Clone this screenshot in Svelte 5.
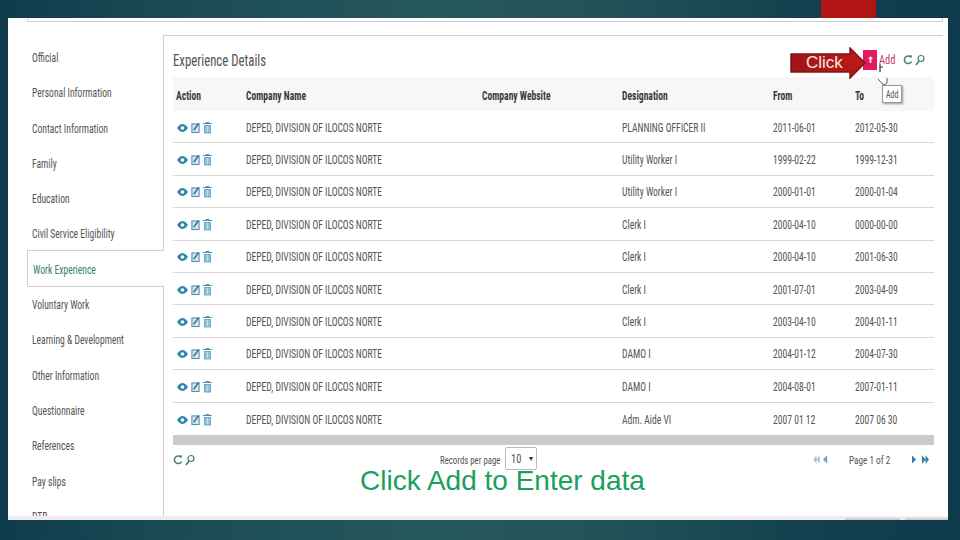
<script>
  const nav = ['Official','Personal Information','Contact Information','Family','Education','Civil Service Eligibility','Work Experience','Voluntary Work','Learning & Development','Other Information','Questionnaire','References','Pay slips','DTR'];
  const heads = ['Company Name','Company Website','Designation','From','To'];
  const org = 'DEPED, DIVISION OF ILOCOS NORTE';
  const rows = [
    ['PLANNING OFFICER II','2011-06-01','2012-05-30'],
    ['Utility Worker I','1999-02-22','1999-12-31'],
    ['Utility Worker I','2000-01-01','2000-01-04'],
    ['Clerk I','2000-04-10','0000-00-00'],
    ['Clerk I','2000-04-10','2001-06-30'],
    ['Clerk I','2001-07-01','2003-04-09'],
    ['Clerk I','2003-04-10','2004-01-11'],
    ['DAMO I','2004-01-12','2004-07-30'],
    ['DAMO I','2004-08-01','2007-01-11'],
    ['Adm. Aide VI','2007 01 12','2007 06 30']
  ];
</script>

{#snippet refresh()}
  <svg class="ic" viewBox="0 0 10 12" width="10" height="12"><path d="M8 3.200A3.800 3.800 0 1 0 8.600 7.500" fill="none" stroke="#3f7f78" stroke-width="1.500"/><path d="M6.500 1.200 9 1.600 8.400 4.200Z" fill="#3f7f78"/></svg>
{/snippet}
{#snippet search()}
  <svg class="ic" viewBox="0 0 10 12" width="10" height="12"><circle cx="6" cy="4.500" r="3" fill="none" stroke="#3f7f78" stroke-width="1.200"/><path d="M4 7 1 11" stroke="#3f7f78" stroke-width="1.500"/></svg>
{/snippet}

<div class="slide">
  <div class="sheet">
    <div class="topline"></div>
    <div class="body">
      <nav class="side">
        {#each nav as item}
          <div class="nav" class:active={item === 'Work Experience'}><span class="t">{item}</span></div>
        {/each}
      </nav>
      <section class="main">
        <header class="head">
          <h1><span class="t">Experience Details</span></h1>
          <div class="tools">
            <span class="plus"><svg viewBox="0 0 6 8" width="5" height="7"><path d="M3 0 6 3.500H4V8H2V3.500H0Z" fill="#fff"/></svg></span>
            <span class="add"><span class="t">Add</span></span>
            {@render refresh()}
            {@render search()}
          </div>
        </header>
        <div class="table">
          <div class="row th">
            <span class="t">Action</span>
            {#each heads as h}<span class="t">{h}</span>{/each}
          </div>
          {#each rows as r}
            <div class="row">
              <span class="acts">
                <svg viewBox="0 0 11 10" width="11" height="10"><path d="M0 5Q5.500-3 11 5 5.500 13 0 5Z" fill="#2e86ad"/><circle cx="5.500" cy="5" r="1.800" fill="#fff"/></svg>
                <svg viewBox="0 0 10 12" width="9" height="12"><rect x="1" y="1.500" width="8" height="9.500" fill="#d5e8f0" stroke="#4b93b5" stroke-width="1.200"/><path d="M3 8.500 8.500 1" stroke="#2e6f8e" stroke-width="1.500"/></svg>
                <svg viewBox="0 0 9 12" width="9" height="12"><path d="M0 1.500H9M3 1.500V.5H6V1.500" stroke="#4b93b5" fill="none"/><path d="M1 3H8V11.500H1Z" fill="#6ba8c4"/><path d="M3 4V10.500M4.500 4V10.500M6 4V10.500" stroke="#fff" stroke-width=".6"/></svg>
              </span>
              <span class="t">{org}</span><span></span><span class="t">{r[0]}</span><span class="t">{r[1]}</span><span class="t">{r[2]}</span>
            </div>
          {/each}
        </div>
        <div class="scroll"></div>
        <footer class="foot">
          <div class="left">{@render refresh()}{@render search()}</div>
          <div class="perpage"><span class="t rp">Records per page</span><span class="select"><span class="t">10</span><i>▾</i></span></div>
          <div class="pager">
            <svg class="faint d" viewBox="0 0 7 10" width="7" height="9"><path d="M3.500 0V10L0 5ZM7 0V10L3.500 5Z"/></svg>
            <svg class="faint2 s" viewBox="0 0 6 10" width="5" height="9"><path d="M5 0V10L0 5Z"/></svg>
            <span class="pi"><span class="t">Page 1 of 2</span></span>
            <svg class="s2" viewBox="0 0 5 10" width="4" height="9"><path d="M0 0V10L5 5Z"/></svg>
            <svg class="d2" viewBox="0 0 8 10" width="7" height="9"><path d="M0 0V10L4 5ZM4 0V10L8 5Z"/></svg>
          </div>
        </footer>
      </section>
    </div>
  </div>

  <div class="redtab"></div>
  <svg class="arrow" viewBox="0 0 76 32" width="76" height="32"><defs><linearGradient id="g" x1="0" x2="1"><stop offset="0" stop-color="#a01514"/><stop offset="1" stop-color="#bd1a16"/></linearGradient></defs><path d="M1 7H60V1L75 16 60 31V25H1Z" fill="url(#g)" stroke="#7d1414" stroke-width="1.500"/></svg>
  <span class="clicktxt">Click</span>
  <svg class="cursor" viewBox="0 0 12 22" width="12" height="22"><path d="M2 0V8M2 3H5" stroke="#333" stroke-width="1.200" fill="none"/><path d="M0 15Q3 19 6 21 10 20 9 14" stroke="#555" fill="#fff"/></svg>
  <span class="tip"><span class="t">Add</span></span>
  <div class="caption">Click Add to Enter data</div>
  <div class="strip a"></div>
  <div class="strip b"></div>
</div>

<style>
  :global(body){margin:0}
  .slide{position:relative;width:960px;height:540px;overflow:hidden;padding:18px 12px 20px 8px;box-sizing:border-box;
    background:linear-gradient(90deg,#103b4c 0,#1b4a55 18%,#27585c 45%,#235359 62%,#133f4e 85%,#0e3a4c 100%);}
  .sheet{height:502px;background:#fff;overflow:hidden;border-bottom:4px solid #eeeeee;box-sizing:border-box;
    font-family:"Roboto",sans-serif;font-stretch:75%;color:#444;}
  .t{display:inline-block;transform:scaleX(.8);transform-origin:left center;white-space:nowrap}
  .topline{height:3px;margin:0 5px 0 19px;border-bottom:1px solid #cfcfcf;border-left:1px solid #d6d6d6;border-right:1px solid #d6d6d6;box-sizing:content-box}
  .body{display:flex;margin-top:13px;margin-right:5px;height:490px}
  .side{width:155px;flex:none;padding-top:6px;box-sizing:border-box}
  .nav{height:35.3px;line-height:35.3px;padding-left:24px;font-size:12px;color:#555;white-space:nowrap}
  .nav.active{margin-left:19px;padding-left:5px;background:#fff;border:1px solid #cfcfcf;border-right:0;margin-right:-1px;height:37px;line-height:38px;margin-top:-2.5px;margin-bottom:.8px;position:relative;z-index:1;color:#3c7d78;box-sizing:border-box}
  .main{flex:1;border-left:1px solid #cfcfcf;border-top:1px solid #cfcfcf;padding:0 9px;box-sizing:border-box;min-width:0}
  .head{height:41px;display:flex;justify-content:space-between;align-items:center;padding-top:8px;box-sizing:border-box}
  h1{margin:0;font-weight:400;font-size:16px;color:#555}
  .tools{display:flex;align-items:center;margin-right:9px;margin-top:-2px}
  .plus{width:14px;height:20px;background:#e6185e;display:flex;align-items:center;justify-content:center}
  .add{color:#c2386c;font-size:13px;width:22px;margin-left:2px;box-sizing:border-box}
  .ic{display:block;margin-left:2px}
  .row{display:grid;grid-template-columns:70px 236px 140px 151px 82px 1fr;height:32.4px;align-items:center;border-bottom:1px solid #d9d9d9;box-sizing:border-box;font-size:12px;color:#555;padding:2px 0 0 3px;white-space:nowrap}
  .th{height:34px;background:#f7f7f7;border:0;font-weight:700;color:#3a3a3a;padding-top:3px}
  .acts{display:flex;align-items:center;gap:3px}
  .acts svg:first-child{margin-left:1px}
  .table .row:last-child{border-bottom:0}
  .scroll{height:10px;background:#cbcbcb}
  .foot{display:flex;align-items:center;height:30px;font-size:11px;position:relative}
  .left{display:flex;margin-left:-2px}
  .perpage{white-space:nowrap;position:absolute;left:267px;top:2px;display:flex;align-items:center;gap:3px;color:#555}
  .rp{width:62px;margin-top:5px}
  .select{width:32px;height:23px;border:1px solid #bbb;border-radius:2px;box-sizing:border-box;display:flex;justify-content:space-between;align-items:center;padding:0 3px 0 5px;font-size:13px}
  .select i{font-style:normal;font-size:8px;color:#333}
  .pager{position:absolute;right:5px;top:8px;display:flex;align-items:center;color:#555;white-space:nowrap}
  .pager svg{display:block;fill:#2f7fa8}
  .pager svg.faint{fill:#a9c6d2}
  .pager svg.faint2{fill:#7fa3b3;margin-left:3px}
  .pi{width:41px;margin:0 22px 0 21px;font-size:11.500px}
  .d2{margin-left:6px}
  .redtab{position:absolute;left:821px;top:0;width:55px;height:18px;background:#b01513}
  .arrow{position:absolute;left:790px;top:47px}
  .clicktxt{position:absolute;left:806px;top:53px;font:17px "Liberation Sans",sans-serif;color:#f3e6e6}
  .cursor{position:absolute;left:878px;top:64px}
  .tip{position:absolute;left:882px;top:85px;width:20px;height:18px;border:1px solid #999;box-shadow:1px 1px 2px #999;background:#fff;font:10px "Roboto",sans-serif;font-stretch:75%;color:#555;padding-left:3px;line-height:17px;box-sizing:border-box}
  .caption{position:absolute;left:360px;top:465px;font:28px/32px "Liberation Sans",sans-serif;color:#1aa05c;white-space:nowrap}
  .strip{position:absolute;top:518px;height:2px;background:#cfcfcf}
  .strip.a{left:845px;width:55px}
  .strip.b{left:905px;width:43px}
</style>
